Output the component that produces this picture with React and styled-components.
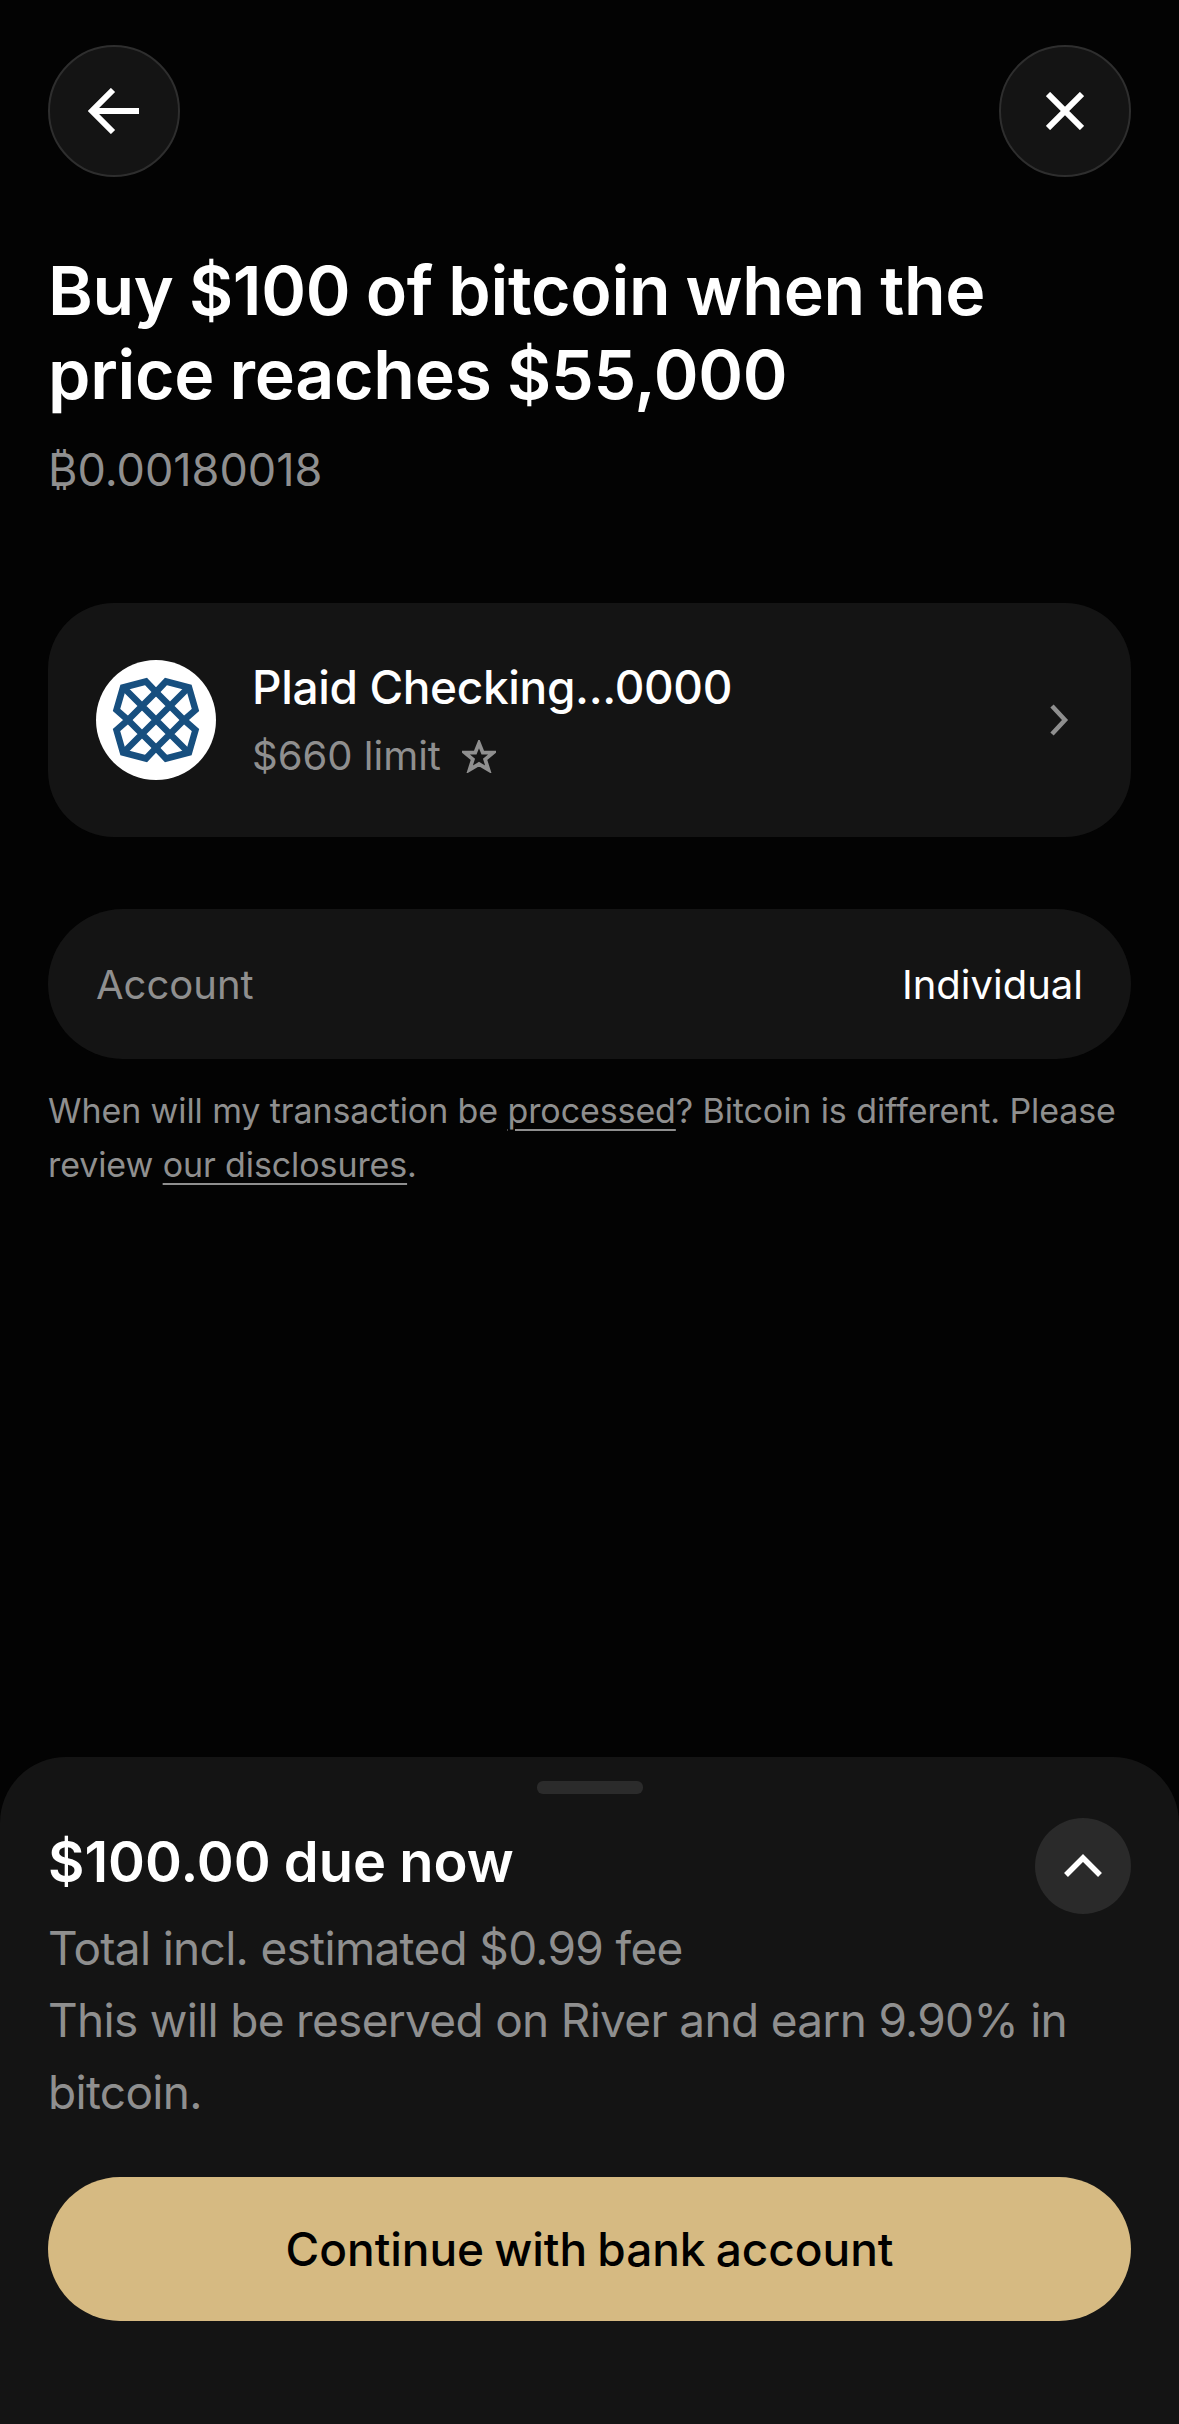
import React from "react";
import styled, { createGlobalStyle } from "styled-components";

const Global = createGlobalStyle`
  html, body { margin: 0; padding: 0; background: #030303; }
  * { box-sizing: border-box; }
  body { font-family: Inter, "Liberation Sans", sans-serif; -webkit-font-smoothing: antialiased; }
`;

const Page = styled.div`
  width: 1179px;
  height: 2424px;
  background: #030303;
  display: flex;
  flex-direction: column;
  overflow: hidden;
`;
const Main = styled.main`
  flex: 1;
  padding: 45px 48px 0;
  display: flex;
  flex-direction: column;
`;
const TopBar = styled.div`
  display: flex;
  justify-content: space-between;
`;
const RoundButton = styled.button`
  width: 132px;
  height: 132px;
  border-radius: 50%;
  background: #141414;
  border: 2px solid #2e2e2e;
  padding: 0;
  display: flex;
  align-items: center;
  justify-content: center;
`;
const Title = styled.h1`
  margin: 71px 0 0;
  font-size: 68px;
  line-height: 84px;
  font-weight: 600;
  letter-spacing: -0.3px;
  word-spacing: -1.5px;
  color: #fff;
`;
const Sub = styled.div`
  margin-top: 26px;
  font-size: 45px;
  line-height: 56px;
  color: #8f8f8f;
`;
const Card = styled.div`
  margin-top: 105px;
  height: 234px;
  border-radius: 66px;
  background: #141414;
  padding: 0 62px 0 48px;
  display: flex;
  align-items: center;
`;
const Logo = styled.div`
  width: 120px;
  height: 120px;
  border-radius: 50%;
  background: #fff;
  display: flex;
  align-items: center;
  justify-content: center;
  flex: none;
`;
const CardText = styled.div`
  margin-left: 36px;
  flex: 1;
  display: flex;
  flex-direction: column;
  gap: 16px;
`;
const CardTitle = styled.div`
  font-size: 46px;
  line-height: 56px;
  font-weight: 500;
  color: #fff;
  letter-spacing: -0.35px;
`;
const CardSub = styled.div`
  font-size: 40px;
  line-height: 50px;
  color: #8f8f8f;
  display: flex;
  align-items: center;
  gap: 21px;
`;
const Row = styled.div`
  margin-top: 72px;
  height: 150px;
  border-radius: 75px;
  background: #141414;
  padding: 0 48px;
  display: flex;
  align-items: center;
  justify-content: space-between;
  font-size: 40px;
`;
const RowLabel = styled.span`
  color: #8f8f8f;
`;
const RowValue = styled.span`
  color: #fff;
`;
const Note = styled.p`
  margin: 25px 0 0;
  font-size: 34px;
  line-height: 54px;
  color: #8f8f8f;
  letter-spacing: -0.1px;
  a { color: inherit; text-decoration: underline; text-underline-offset: 6px; text-decoration-thickness: 2px; }
`;
const Sheet = styled.section`
  height: 667px;
  flex: none;
  background: #141414;
  border-radius: 66px 66px 0 0;
  padding: 24px 48px 0;
  display: flex;
  flex-direction: column;
`;
const Handle = styled.div`
  width: 106px;
  height: 13px;
  border-radius: 6px;
  background: #2b2b2b;
  align-self: center;
`;
const SheetHead = styled.div`
  margin-top: 24px;
  display: flex;
  justify-content: space-between;
  align-items: flex-start;
`;
const Due = styled.div`
  margin-top: 10px;
  font-size: 56px;
  line-height: 68px;
  font-weight: 600;
  color: #fff;
  letter-spacing: 0;
  word-spacing: -1px;
`;
const Chevron = styled.button`
  width: 96px;
  height: 96px;
  border-radius: 50%;
  background: #2a2a2a;
  border: 0;
  padding: 0;
  display: flex;
  align-items: center;
  justify-content: center;
`;
const SheetText = styled.div`
  margin-top: -2px;
  font-size: 46px;
  line-height: 72px;
  color: #8f8f8f;
  letter-spacing: -0.7px;
`;
const Cta = styled.button`
  margin-top: 49px;
  height: 144px;
  border-radius: 72px;
  background: #d6ba82;
  border: 0;
  font-family: inherit;
  font-size: 46px;
  font-weight: 500;
  color: #000;
  letter-spacing: -0.05px;
  word-spacing: -2px;
`;

const PlaidMark = () => (
  <svg width="90" height="90" viewBox="-45 -45 90 90" fill="none" stroke="#174f7f" strokeWidth="6.5" strokeLinejoin="miter">
    <path d="M-10 -38.5 L0 -28 L10 -38.5 L33 -32.5 L39.5 -10 L28 0 L39.5 10 L33 32.5 L10 38.5 L0 28 L-10 38.5 L-33 32.5 L-39.5 10 L-28 0 L-39.5 -10 L-33 -32.5 Z" />
    <path d="M-33 -33 L33 33 M33 -33 L-33 33 M0 -28 L28 0 L0 28 L-28 0 Z" />
  </svg>
);

export default function App() {
  return (
    <Page>
      <Global />
      <Main>
        <TopBar>
          <RoundButton aria-label="Back">
            <svg width="52" height="46" viewBox="0 0 52 46" fill="none" stroke="#fff" strokeWidth="6">
              <path d="M25 2 L4 23 L25 44 M4 23 H51" />
            </svg>
          </RoundButton>
          <RoundButton aria-label="Close">
            <svg width="38" height="38" viewBox="0 0 38 38" fill="none" stroke="#fff" strokeWidth="6">
              <path d="M2 2 L36 36 M36 2 L2 36" />
            </svg>
          </RoundButton>
        </TopBar>
        <Title>Buy $100 of bitcoin when the price reaches $55,000</Title>
        <Sub>₿0.00180018</Sub>
        <Card>
          <Logo><PlaidMark /></Logo>
          <CardText>
            <CardTitle>Plaid Checking...0000</CardTitle>
            <CardSub>
              $660 limit
              <svg width="34" height="33" viewBox="0 0 36 34" fill="none" stroke="#8f8f8f" strokeWidth="4">
                <path d="M18 3 L22 13 L33 13 L24.5 20 L28 31 L18 25 L8 31 L11.5 20 L3 13 L14 13 Z" />
              </svg>
            </CardSub>
          </CardText>
          <svg width="20" height="32" viewBox="0 0 20 32" fill="none" stroke="#8f8f8f" strokeWidth="4.5">
            <path d="M3 2 L16 16 L3 30" />
          </svg>
        </Card>
        <Row>
          <RowLabel>Account</RowLabel>
          <RowValue>Individual</RowValue>
        </Row>
        <Note>
          When will my transaction be <a>processed</a>? Bitcoin is different. Please review <a>our disclosures</a>.
        </Note>
      </Main>
      <Sheet>
        <Handle />
        <SheetHead>
          <Due>$100.00 due now</Due>
          <Chevron aria-label="Expand">
            <svg width="40" height="24" viewBox="0 0 40 24" fill="none" stroke="#fff" strokeWidth="5.5">
              <path d="M3 21 L20 4 L37 21" />
            </svg>
          </Chevron>
        </SheetHead>
        <SheetText>
          Total incl. estimated $0.99 fee<br />
          This will be reserved on River and earn 9.90% in bitcoin.
        </SheetText>
        <Cta>Continue with bank account</Cta>
      </Sheet>
    </Page>
  );
}
